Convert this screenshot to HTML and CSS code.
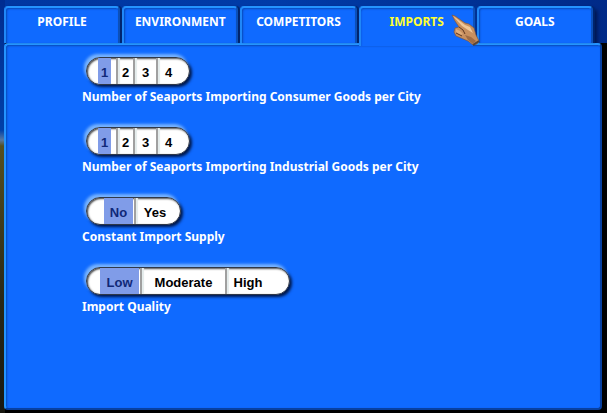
FILE: index.html
```html
<!DOCTYPE html>
<html lang="en">
<head>
    <meta charset="UTF-8">
    <meta name="viewport" content="width=device-width, initial-scale=1.0">
    <title>Imports</title>
    <link rel="stylesheet" href="styles.css">
</head>
<body>
    <nav class="tabs">
        <button type="button" class="tab">PROFILE</button>
        <button type="button" class="tab">ENVIRONMENT</button>
        <button type="button" class="tab">COMPETITORS</button>
        <button type="button" class="tab active">
            IMPORTS
            <!-- Hand pointer -->
            <svg class="pointer" viewBox="0 0 30 34" aria-hidden="true">
                <path d="M1 1 L4 2 L14 9 L18 10 L23 14 L25 21 L28 27 L26 30 L22 31 L17 27 L10 24 L5 22 L3 18 L4 14 L8 13 L4 7 Z" fill="#c89060" stroke="#805030" stroke-width="0.6"/>
                <path d="M2 2 L5 4 L14 11 L19 13 L22 19 L17 16 L11 12 Z" fill="#f0c898"/>
                <path d="M5 15 L9 17 L12 20 L9 21 L5 18 Z" fill="#e0ac78"/>
                <path d="M8 13 L12 16 L14 20 M5 19 L11 22" fill="none" stroke="#603820" stroke-width="1"/>
                <path d="M14 21 L20 23 L25 27 L22 30 L17 26 Z" fill="#a06c44"/>
                <path d="M22 31 L28 27" stroke="#54443c" stroke-width="2"/>
            </svg>
        </button>
        <button type="button" class="tab">GOALS</button>
    </nav>

    <main class="panel">
        <fieldset class="option">
            <div class="pill numbers">
                <label><input type="radio" name="consumer" checked><span>1</span></label>
                <label><input type="radio" name="consumer"><span>2</span></label>
                <label><input type="radio" name="consumer"><span>3</span></label>
                <label><input type="radio" name="consumer"><span>4</span></label>
            </div>
            <legend>Number of Seaports Importing Consumer Goods per City</legend>
        </fieldset>

        <fieldset class="option">
            <div class="pill numbers">
                <label><input type="radio" name="industrial" checked><span>1</span></label>
                <label><input type="radio" name="industrial"><span>2</span></label>
                <label><input type="radio" name="industrial"><span>3</span></label>
                <label><input type="radio" name="industrial"><span>4</span></label>
            </div>
            <legend>Number of Seaports Importing Industrial Goods per City</legend>
        </fieldset>

        <fieldset class="option">
            <div class="pill supply">
                <label><input type="radio" name="supply" checked><span>No</span></label>
                <label><input type="radio" name="supply"><span>Yes</span></label>
            </div>
            <legend>Constant Import Supply</legend>
        </fieldset>

        <fieldset class="option">
            <div class="pill quality">
                <label><input type="radio" name="quality" checked><span>Low</span></label>
                <label><input type="radio" name="quality"><span>Moderate</span></label>
                <label><input type="radio" name="quality"><span>High</span></label>
            </div>
            <legend>Import Quality</legend>
        </fieldset>
    </main>
</body>
</html>
```
FILE: styles.css
```css
* {
    box-sizing: border-box;
}

body {
    margin: 0;
    padding: 6px 5px 3px 4px;
    min-height: 100vh;
    display: flex;
    flex-direction: column;
    font-family: "Noto Sans", sans-serif;
    font-size: 12px;
    font-weight: bold;
    color: white;
    background:
        linear-gradient(#002c90, #0040a8 130px, #5878a0 140px, #565020 146px, #292816 300px, #181810) left / 5px 100% no-repeat,
        linear-gradient(to right, #0036a0, #003ba8 45%, #002a88) top / 100% 43px no-repeat,
        #000;
}

.tabs {
    display: grid;
    grid-template-columns: repeat(5, 1fr);
    gap: 2px;
    margin-right: 9px;
    box-shadow: 4px 4px 4px #001448;
}

.tab {
    position: relative;
    height: 37px;
    padding: 0 0 9px;
    font: inherit;
    color: white;
    background: #0f6aff;
    border: 2px solid #1470e0;
    border-top-color: #2494ff;
    border-left-color: #2088f8;
    border-right-color: #0c50b8;
    border-bottom: none;
    border-radius: 4px 4px 0 0;
    box-shadow: inset 1px 1px 2px #0848b8, 2px 0 1px #00246c;
    cursor: pointer;
}

.tab.active {
    z-index: 1;
    height: 40px;
    margin-bottom: -3px;
    padding-bottom: 12px;
    color: #ffff30;
    box-shadow: inset 1px 2px 2px -1px #0848b8;
}

.pointer {
    position: absolute;
    top: 6px;
    right: -8px;
    width: 30px;
    height: 34px;
}

.panel {
    flex: 1;
    padding: 12px 0 0 76px;
    background: #0f6aff;
    border: 2px solid #2494ff;
    border-right-color: #0840a0;
    border-bottom-color: #0840a0;
    border-radius: 4px;
    box-shadow: inset 1px 1px 2px #0848b8;
}

.option {
    display: flex;
    flex-direction: column;
    height: 70px;
    margin: 0;
    padding: 0;
    border: none;
}

.option legend {
    float: left;
    padding: 0;
    margin-top: 3px;
    line-height: 18px;
}

.pill {
    display: flex;
    align-self: flex-start;
    height: 28px;
    margin-left: 4px;
    overflow: hidden;
    font-family: "Liberation Sans", Arial, sans-serif;
    font-size: 13px;
    color: black;
    background: white;
    border: 1px solid #303848;
    border-radius: 14px;
    box-shadow: inset 1px 1px 2px #404040, -2px -3px 3px #78b4ff, 2px 2px 3px #00184c;
}

.pill label {
    display: flex;
    cursor: pointer;
}

.pill label + label {
    border-left: 2px solid #a0a0a0;
    box-shadow: inset 2px 0 1px #e4ecec;
}

.pill input {
    position: absolute;
    opacity: 0;
    margin: 0;
}

.pill span {
    display: flex;
    align-items: center;
    justify-content: center;
    padding-top: 2px;
}

.pill input:checked + span {
    color: #102878;
    background: #809ce8;
}

.pill input:focus-visible + span {
    outline: 1px dotted #102878;
}

.numbers span {
    width: 21px;
}

.numbers label:first-child span {
    width: 13px;
    margin: 0 5px 0 11px;
}

.numbers label:nth-child(2) span {
    width: 15px;
}

.numbers label:last-child span {
    margin-right: 10px;
}

.supply span {
    width: 38px;
    margin-right: 6px;
}

.supply label:first-child span {
    width: 29px;
    margin: 0 1px 0 17px;
}

.quality span {
    width: 83px;
}

.quality label:first-child span {
    width: 39px;
    margin: 0 1px 0 13px;
}

.quality label:last-child span {
    width: 42px;
    margin-right: 20px;
}
```
